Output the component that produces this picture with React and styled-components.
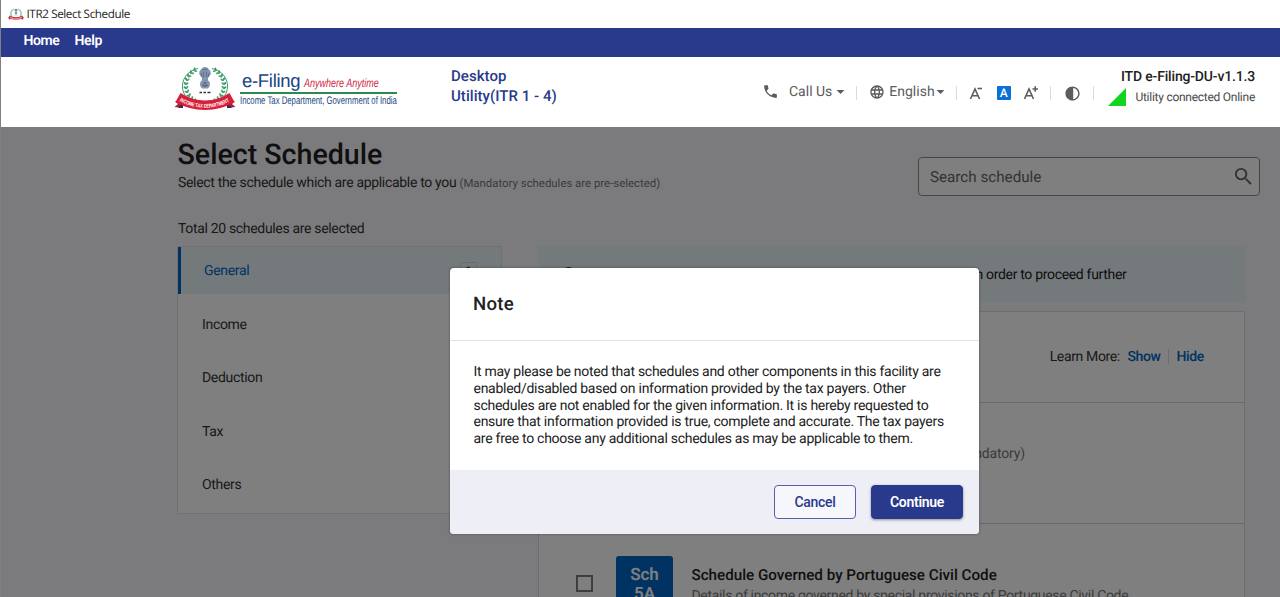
import styled, { createGlobalStyle } from "styled-components";
import { MdPhone, MdArrowDropDown, MdSearch, MdContrast, MdLanguage } from "react-icons/md";

const MENU = ["Home", "Help"];

const CATEGORIES = [
  { name: "General", count: 1, active: true },
  { name: "Income" },
  { name: "Deduction" },
  { name: "Tax" },
  { name: "Others" },
];

// leaves of one half of the wreath, from the bottom to the top
const LEAVES = Array.from({ length: 13 }, (_, i) => {
  const angle = ((100 - i * 13) * Math.PI) / 180;
  return { x: 31 + 19 * Math.cos(angle), y: 20.5 + 18 * Math.sin(angle), turn: 100 - i * 13 };
});

const Emblem = ({ width, height }) => (
  <svg width={width} height={height} viewBox="0 0 62 45">
    {[1, -1].map((side) => (
      <g key={side} transform={side === 1 ? undefined : "translate(62 0) scale(-1 1)"}>
        <path d="M31 39A19 18 0 0 0 38 3.5" fill="none" stroke="#3f9c6b" strokeWidth="1" />
        {LEAVES.map((leaf) => (
          <g key={leaf.turn} transform={`translate(${leaf.x} ${leaf.y}) rotate(${leaf.turn})`}>
            <ellipse cx="1.1" cy="0" rx="1.9" ry="1" fill="#35945f" transform="rotate(-40)" />
            <ellipse cx="-1.1" cy="0" rx="1.9" ry="1" fill="#4da878" transform="rotate(40)" />
          </g>
        ))}
      </g>
    ))}
    <g fill="#8496ae">
      <path d="M27 4.5Q28.5 1.5 31 2Q33.500 1.500 35 4.500L36.500 6Q37.500 9 35.500 11L34 13H28L26.500 11Q24.500 9 25.500 6Z" />
      <path d="M28 13H34V16H28Z" />
      <path d="M27 16Q31 14.500 35 16Q37.500 20 34 23.500H28Q24.500 20 27 16Z" />
    </g>
    <g fill="none" stroke="#4a5f82" strokeWidth="0.7">
      <path d="M28.500 4.500H33.500M29.500 6.500V12M32.500 6.500V12M27 8L28 12M35 8L34 12M29.500 17.500H32.500M28 20.500H34" />
      <circle cx="31" cy="20" r="1.600" />
    </g>
    <path d="M25.500 27.500H28M29.500 27.500H32M33.500 27.500H36.500" stroke="#333" strokeWidth="1.300" />
    <path d="M0.500 42L4 39 1 36.500 9 34V43ZM61.500 42L58 39 61 36.500 53 34V43Z" fill="#a91f35" />
    <path d="M4 43L9 38V43ZM58 43L53 38V43Z" fill="#2b2c63" />
    <path d="M6.500 28Q18 35.500 31 35.500Q44 35.500 55.500 28L60.500 37Q47 45 31 45Q15 45 1.500 37Z" fill="#d81f38" />
    <path id="ribbon" d="M5.500 36Q18 42.800 31 42.800Q44 42.800 56.500 36" fill="none" />
    <RibbonText>
      <textPath href="#ribbon" textLength="52" lengthAdjust="spacingAndGlyphs">
        INCOME TAX DEPARTMENT
      </textPath>
    </RibbonText>
  </svg>
);

const App = () => {
  return (
    <>
      <GlobalStyle />
      <Window>
        <TitleBar>
          <Emblem width={16} height={12} />
          ITR2 Select Schedule
        </TitleBar>
        <MenuBar>
          {MENU.map((item) => (
            <MenuItem key={item}>{item}</MenuItem>
          ))}
        </MenuBar>
        <Header>
          <Logo>
            <Emblem width={62} height={45} />
            <LogoText>
              <LogoTop>
                <LogoName>e-Filing</LogoName>
                <LogoSlogan>Anywhere Anytime</LogoSlogan>
              </LogoTop>
              <LogoDept>Income Tax Department, Government of India</LogoDept>
            </LogoText>
          </Logo>
          <Product>Desktop Utility(ITR 1 - 4)</Product>
          <Tools>
            <CallUs>
              <MdPhone size={17} />
              <span>Call Us</span>
              <MdArrowDropDown size={19} />
            </CallUs>
            <Separator />
            <Language>
              <MdLanguage size={16} />
              <span>English</span>
              <MdArrowDropDown size={19} />
            </Language>
            <Separator />
            <FontSizes>
              <FontIcon sign="minus" />
              <FontDefault>A</FontDefault>
              <FontIcon sign="plus" />
            </FontSizes>
            <Separator />
            <Contrast>
              <MdContrast size={17} />
            </Contrast>
            <Separator />
          </Tools>
          <Status>
            <Version>ITD e-Filing-DU-v1.1.3</Version>
            <Online>
              <svg width="18" height="18">
                <path d="M18 0V18H0Z" fill="#12d51f" />
              </svg>
              Utility connected Online
            </Online>
          </Status>
        </Header>
        <Main>
          <Intro>
            <div>
              <Title>Select Schedule</Title>
              <Subtitle>
                Select the schedule which are applicable to you{" "}
                <Hint>(Mandatory schedules are pre-selected)</Hint>
              </Subtitle>
            </div>
            <Search>
              <span>Search schedule</span>
              <MdSearch size={23} />
            </Search>
          </Intro>
          <Total>Total 20 schedules are selected</Total>
          <Columns>
            <Categories>
              {CATEGORIES.map(({ name, count, active }) => (
                <Category key={name} $active={active}>
                  {name}
                  {count && <Count>{count}</Count>}
                </Category>
              ))}
            </Categories>
            <Content>
              <Alert>
                <AlertIcon />
                <span>in order to proceed further</span>
              </Alert>
              <Card>
                <LearnMore>
                  Learn More:
                  <Link>Show</Link>
                  <LinkDivider />
                  <Link>Hide</Link>
                </LearnMore>
                <Mandatory>(Mandatory)</Mandatory>
                <Schedule>
                  <Checkbox />
                  <Badge>Sch 5A</Badge>
                  <div>
                    <ScheduleName>Schedule Governed by Portuguese Civil Code</ScheduleName>
                    <ScheduleInfo>
                      Details of income governed by special provisions of Portuguese Civil Code
                    </ScheduleInfo>
                  </div>
                </Schedule>
              </Card>
            </Content>
          </Columns>
          <Backdrop />
          <Modal>
            <ModalHeader>Note</ModalHeader>
            <ModalBody>
              It may please be noted that schedules and other components in this facility are
              enabled/disabled based on information provided by the tax payers. Other schedules are
              not enabled for the given information. It is hereby requested to ensure that
              information provided is true, complete and accurate. The tax payers are free to choose
              any additional schedules as may be applicable to them.
            </ModalBody>
            <ModalFooter>
              <Button>Cancel</Button>
              <Button $primary>Continue</Button>
            </ModalFooter>
          </Modal>
        </Main>
      </Window>
    </>
  );
};

const FontIcon = ({ sign }) => (
  <svg width="16" height="16" viewBox="0 0 16 16" fill="none" stroke="#5c5c5c" strokeWidth="1.600">
    <path d="M1.500 14L6 4L10.500 14M3.200 10.800H8.800" />
    {sign === "plus" ? <path d="M9.500 4H15M12.200 1.200V6.800" /> : <path d="M8.500 3.500H13" />}
  </svg>
);

const GlobalStyle = createGlobalStyle`
  * {
    box-sizing: border-box;
  }
  body {
    margin: 0;
    overflow: hidden;
    font-family: Roboto, sans-serif;
    color: #212121;
    text-rendering: geometricPrecision;
  }
`;

const RibbonText = styled.text`
  fill: #fff;
  font-family: "Liberation Sans", sans-serif;
  font-size: 5.5px;
  font-weight: 700;
`;

const Window = styled.div`
  display: flex;
  flex-direction: column;
  height: 597px;
  overflow: hidden;
  border-left: 1px solid #808080;
`;

const TitleBar = styled.div`
  display: flex;
  align-items: center;
  gap: 3px;
  height: 28px;
  padding: 0 0 1px 6.5px;
  background: #fff;
  color: #1c1c1c;
  font-family: "Open Sans", sans-serif;
  font-size: 11.7px;
  letter-spacing: -0.4px;
`;

const MenuBar = styled.nav`
  display: flex;
  gap: 15px;
  height: 29px;
  padding: 4px 0 0 22.5px;
  background: #293a8c;
`;

const MenuItem = styled.span`
  color: #fff;
  font-size: 14px;
  font-weight: 600;
  line-height: 18px;
  letter-spacing: -0.38px;
`;

const Header = styled.header`
  display: flex;
  height: 70px;
  padding-left: 173px;
  background: #fff;
`;

const Logo = styled.div`
  display: flex;
  gap: 4px;
  width: 259px;
  padding-top: 8px;
`;

const LogoText = styled.div`
  width: 157px;
  font-family: "Liberation Sans", sans-serif;
  white-space: nowrap;
`;

const LogoTop = styled.div`
  display: flex;
  align-items: baseline;
  gap: 4px;
  height: 29px;
  padding: 5px 0 0 2px;
  border-bottom: 2px solid #2c8a4b;
`;

const LogoName = styled.span`
  color: #17457f;
  font-size: 18.5px;
  letter-spacing: -0.3px;
`;

const LogoSlogan = styled.span`
  width: 73px;
  color: #d0253f;
  font-size: 12px;
  font-style: italic;
  transform: scaleX(0.75);
  transform-origin: left;
`;

const LogoDept = styled.div`
  color: #17457f;
  font-size: 11px;
  line-height: 14px;
  transform: scaleX(0.705);
  transform-origin: left;
`;

const Product = styled.div`
  width: 130px;
  padding: 9px 0 0 18px;
  color: #293a8c;
  font-size: 15px;
  font-weight: 500;
  line-height: 20px;
  letter-spacing: 0.05px;
`;

const Tools = styled.div`
  display: flex;
  align-items: center;
  padding: 0 0 1px 199px;
  color: #5c5c5c;
  font-size: 14px;
`;

const CallUs = styled.div`
  display: flex;
  align-items: center;
  span {
    margin: 0 -1px 0 10px;
  }
`;

const Language = styled.div`
  display: flex;
  align-items: center;
  span {
    margin: 0 -4px 0 4px;
  }
`;

const Separator = styled.div`
  width: 1px;
  height: 14px;
  margin: 3px 12px 0 6px;
  background: #dcdcdc;
`;

const FontSizes = styled.div`
  display: flex;
  align-items: center;
  gap: 12px;
  margin: 3px 5px 0 0;
`;

const FontDefault = styled.span`
  width: 14px;
  height: 14px;
  border-radius: 1px;
  background: #0b70d6;
  color: #fff;
  font-size: 12px;
  font-weight: 500;
  line-height: 14px;
  text-align: center;
`;

const Contrast = styled.div`
  display: flex;
  padding: 3px 6px 0 1px;
`;

const Status = styled.div`
  flex: 1;
  padding: 11px 25px 0 0;
  text-align: right;
  white-space: nowrap;
`;

const Version = styled.div`
  font-size: 14px;
  font-weight: 500;
  line-height: 18px;
  letter-spacing: -0.17px;
`;

const Online = styled.div`
  display: flex;
  justify-content: flex-end;
  align-items: center;
  gap: 9px;
  color: #4a4a4a;
  font-size: 12px;
  line-height: 22px;
  letter-spacing: -0.26px;
`;

const Main = styled.main`
  position: relative;
  flex: 1;
  padding: 9px 20px 0 177px;
  background: #f7f7fb;
  overflow: hidden;
`;

const Intro = styled.div`
  display: flex;
  justify-content: space-between;
  height: 80px;
`;

const Title = styled.h1`
  margin: 0 0 0 -0.5px;
  font-size: 28.6px;
  font-weight: 500;
  line-height: 36px;
`;

const Subtitle = styled.div`
  padding-top: 1px;
  color: #333;
  font-size: 14px;
  line-height: 20px;
  letter-spacing: -0.32px;
`;

const Hint = styled.span`
  color: #777;
  font-size: 11.4px;
  letter-spacing: 0;
`;

const Search = styled.div`
  display: flex;
  align-items: center;
  justify-content: space-between;
  width: 342px;
  height: 39px;
  margin-top: 21px;
  padding: 0 4px 0 11px;
  border: 1px solid #8a8a8a;
  border-radius: 4px;
  background: #fff;
  color: #666;
  font-size: 15.2px;
`;

const Total = styled.div`
  height: 30px;
  padding-top: 3px;
  color: #333;
  font-size: 14px;
  line-height: 20px;
  letter-spacing: -0.33px;
`;

const Columns = styled.div`
  display: flex;
  align-items: flex-start;
  gap: 36px;
  margin-left: -1px;
`;

const Categories = styled.ul`
  width: 325px;
  height: 268px;
  margin: 0;
  padding: 0;
  border: 1px solid #e0e2ea;
  background: #fff;
  list-style: none;
`;

const Category = styled.li`
  display: flex;
  align-items: center;
  justify-content: space-between;
  height: 47px;
  margin-bottom: 6.5px;
  padding: 1px 24px 0 ${(props) => (props.$active ? "23px" : "24px")};
  border-left: ${(props) => (props.$active ? "3px solid #0066c4" : "none")};
  background: ${(props) => (props.$active ? "#e8f3f9" : "transparent")};
  color: ${(props) => (props.$active ? "#0066c4" : "#333")};
  font-size: 14px;
  letter-spacing: -0.33px;
`;

const Count = styled.span`
  width: 17px;
  height: 19px;
  border: 1px solid #cfd6dc;
  border-radius: 2px;
  color: #333;
  font-size: 12px;
  line-height: 17px;
  text-align: center;
`;

const Content = styled.div`
  width: 707px;
`;

const Alert = styled.div`
  display: flex;
  align-items: center;
  justify-content: space-between;
  height: 56px;
  margin-bottom: 9px;
  padding: 1px 118.5px 0 24px;
  background: #e8f3f9;
  font-size: 14px;
  letter-spacing: -0.32px;
`;

const AlertIcon = styled.span`
  width: 13px;
  height: 13px;
  margin-bottom: 2px;
  border: 2px solid #333;
  border-radius: 50%;
`;

const Card = styled.div`
  height: 340px;
  border: 1px solid #dadce4;
  background: #fff;
`;

const LearnMore = styled.div`
  display: flex;
  align-items: center;
  justify-content: flex-end;
  gap: 7.5px;
  height: 91px;
  padding: 0 40px 1px 0;
  border-bottom: 1px solid #d2d2d2;
  color: #333;
  font-size: 14px;
  letter-spacing: -0.36px;
`;

const Link = styled.a`
  color: #0066c4;
  font-weight: 500;
  letter-spacing: -0.36px;
`;

const LinkDivider = styled.span`
  width: 1px;
  height: 15px;
  background: #dadada;
`;

const Mandatory = styled.div`
  height: 121px;
  padding: 41px 219px 0 0;
  border-bottom: 1px solid #d2d2d2;
  color: #777;
  font-size: 14px;
  line-height: 20px;
  letter-spacing: -0.15px;
  text-align: right;
`;

const Schedule = styled.div`
  display: flex;
  align-items: flex-start;
  padding: 32px 0 0 37px;
`;

const Checkbox = styled.span`
  width: 17px;
  height: 17px;
  margin: 19px 23px 0 0;
  border: 2px solid #7d7d7d;
`;

const Badge = styled.div`
  width: 57px;
  height: 56px;
  margin-right: 18.5px;
  padding: 10px 10px 0;
  border-radius: 3px;
  background: #0066c4;
  color: #fff;
  font-size: 17px;
  font-weight: 600;
  line-height: 19px;
  text-align: center;
`;

const ScheduleName = styled.div`
  padding-top: 9px;
  font-size: 15.2px;
  font-weight: 500;
  line-height: 20px;
`;

const ScheduleInfo = styled.div`
  padding-top: 1px;
  color: #777;
  font-size: 14px;
  line-height: 20px;
  letter-spacing: -0.32px;
`;

const Backdrop = styled.div`
  position: absolute;
  inset: 0;
  background: rgba(0, 0, 0, 0.5);
`;

const Modal = styled.div`
  position: absolute;
  top: 141px;
  left: 449px;
  width: 529px;
  height: 266px;
  border-radius: 4px;
  background: #fff;
  overflow: hidden;
  box-shadow: 0 0 3px rgba(0, 0, 0, 0.35);
`;

const ModalHeader = styled.div`
  height: 73px;
  padding-left: 23px;
  border-bottom: 1px solid #e2e2e2;
  font-size: 18.6px;
  font-weight: 500;
  line-height: 72px;
  letter-spacing: 0.25px;
`;

const ModalBody = styled.div`
  height: 129px;
  padding: 23px 28px 0 23.5px;
  font-size: 14px;
  line-height: 16.8px;
  letter-spacing: -0.27px;
`;

const ModalFooter = styled.div`
  display: flex;
  justify-content: flex-end;
  gap: 15px;
  height: 64px;
  padding: 15px 16px 0 0;
  background: #eeeef7;
`;

const Button = styled.button`
  width: ${(props) => (props.$primary ? "92px" : "82px")};
  height: 34px;
  padding: 0;
  border: 1px solid ${(props) => (props.$primary ? "#293a8c" : "#5562a3")};
  border-radius: 4px;
  background: ${(props) => (props.$primary ? "#293a8c" : "#f6f6fd")};
  color: ${(props) => (props.$primary ? "#fff" : "#293a8c")};
  box-shadow: ${(props) => (props.$primary ? "0 1px 3px rgba(0, 0, 0, 0.4)" : "none")};
  font-family: Roboto, sans-serif;
  font-size: 14px;
  font-weight: ${(props) => (props.$primary ? 600 : 500)};
  letter-spacing: -0.27px;
`;

export default App;
